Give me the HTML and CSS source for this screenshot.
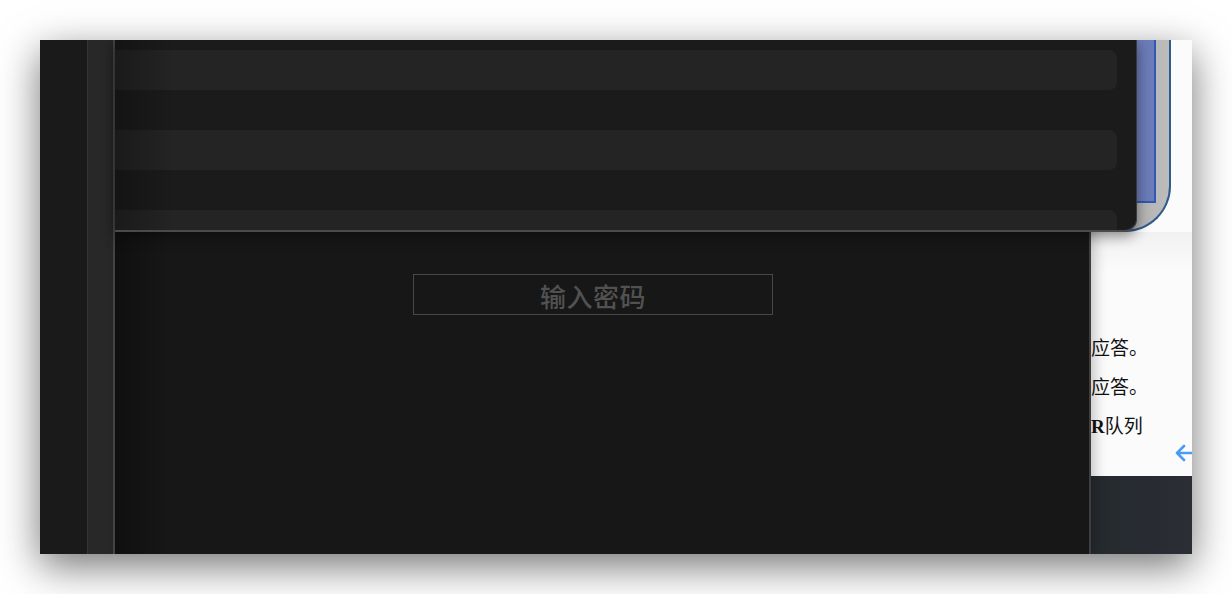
FILE: index.html
```html
<!DOCTYPE html>
<html lang="zh">
<head>
<meta charset="utf-8">
<title>输入密码</title>
<link rel="stylesheet" href="styles.css">
</head>
<body>
<div class="window">
  <div class="rail"></div>
  <div class="rail2"></div>
  <div class="main">
    <div class="panel">
      <div class="row"></div>
      <div class="row"></div>
      <div class="row"></div>
    </div>
    <div class="content">
      <div class="pwd">输入密码</div>
    </div>
    <div class="behind">
      <div class="bgwin"><div class="bluebar"></div></div>
      <div class="doc">
        <p class="line">应答。</p>
        <p class="line">应答。</p>
        <p class="line"><b>R</b>队列</p>
        <div class="arrow">
          <svg width="24" height="18" viewBox="0 0 24 18"><path d="M9 2 L2 9 L9 16 M2 9 H24" fill="none" stroke="#4a9cf2" stroke-width="2.6" stroke-linecap="round" stroke-linejoin="round"/></svg>
        </div>
      </div>
      <div class="dock"></div>
    </div>
  </div>
</div>
</body>
</html>
```

FILE: styles.css
```css
html, body {
  margin: 0;
  padding: 0;
  background: #ffffff;
}
body {
  padding: 40px;
  font-family: "Noto Sans CJK SC", sans-serif;
}
.window {
  width: 1152px;
  height: 514px;
  display: flex;
  overflow: hidden;
  box-shadow: 0 12px 38px rgba(0, 0, 0, 0.55);
  background: #171717;
}
.rail {
  width: 47px;
  background: #1a1a1a;
  flex: none;
}
.rail2 {
  width: 25px;
  flex: none;
  background: #282828;
  border-left: 1px solid #353535;
  border-right: 2px solid #474747;
}
.main {
  flex: 1;
  display: flex;
  position: relative;
}
.panel {
  position: absolute;
  left: 0;
  top: 0;
  width: 1021px;
  height: 180px;
  box-sizing: content-box;
  background: #1b1b1b;
  border-right: 1px solid #3c3c3c;
  border-bottom: 2px solid #4a4a4a;
  border-bottom-right-radius: 13px;
  overflow: hidden;
  z-index: 3;
  padding-top: 10px;
  box-shadow: 0 4px 14px rgba(0, 0, 0, 0.45);
}
.panel::after {
  content: "";
  position: absolute;
  left: 0;
  top: 0;
  bottom: 0;
  width: 60px;
  background: linear-gradient(to right, rgba(0, 0, 0, 0.28), rgba(0, 0, 0, 0));
}
.row {
  height: 40px;
  margin-right: 19px;
  margin-bottom: 40px;
  background: #242424;
  border-radius: 0 8px 8px 0;
}
.content {
  width: 974px;
  flex: none;
  border-right: 2px solid #3e3e3e;
  background: linear-gradient(to right, #0f0f0f, #171717 55px);
  padding-top: 234px;
  position: relative;
  z-index: 2;
  box-shadow: 4px 0 12px rgba(0, 0, 0, 0.22);
}
.pwd {
  margin-left: 298px;
  width: 358px;
  height: 39px;
  border: 1px solid #484848;
  color: #515151;
  font-size: 26px;
  font-weight: 500;
  line-height: 42px;
  text-align: center;
  letter-spacing: 0.5px;
}
.behind {
  flex: 1;
  display: flex;
  flex-direction: column;
  background: #fbfbfb;
  overflow: hidden;
}
.bgwin {
  flex: none;
  width: 78px;
  height: 190px;
  background: linear-gradient(to right, #a9a9a9, #bcbcbc);
  border-right: 2px solid #2f5b8c;
  border-bottom: 2px solid #2f5b8c;
  border-bottom-right-radius: 46px;
}
.bluebar {
  margin-left: 46px;
  width: 17px;
  height: 161px;
  background: #6b7cb8;
  border-right: 2px solid #3159b2;
  border-bottom: 2px solid #3159b2;
}
.doc {
  flex: 1;
  display: flex;
  flex-direction: column;
  padding-top: 97px;
  background: linear-gradient(to bottom, #f1f1f1, #fbfbfb 40px);
  font-family: "Liberation Serif", "Noto Sans CJK SC", serif;
  font-size: 19px;
  color: #111;
}
.line {
  margin: 0;
  height: 39px;
  line-height: 39px;
  white-space: nowrap;
}
.arrow {
  margin-left: 84px;
  margin-top: -2px;
  height: 18px;
}
.arrow svg {
  display: block;
}
.dock {
  flex: none;
  height: 78px;
  background: linear-gradient(to right, #252a2f, #2b2e34);
}
```
